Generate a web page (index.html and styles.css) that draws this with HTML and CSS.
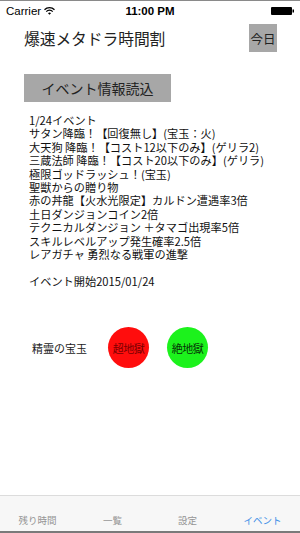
FILE: index.html
```html
<!DOCTYPE html>
<html lang="ja">
<head>
<meta charset="utf-8">
<link rel="stylesheet" href="styles.css">
</head>
<body>
<div class="screen">
  <div class="status">
    <div class="status-left">
      <span class="carrier">Carrier</span>
      <svg class="wifi" width="11" height="8" viewBox="0 0 11 8">
        <path d="M0.5 2.8 A7 7 0 0 1 10.5 2.8" fill="none" stroke="#000" stroke-width="1.3"/>
        <path d="M2.3 4.6 A4.4 4.4 0 0 1 8.7 4.6" fill="none" stroke="#000" stroke-width="1.3"/>
        <path d="M4 6.3 A2 2 0 0 1 7 6.3 L5.5 7.8 Z" fill="#000"/>
      </svg>
    </div>
    <div class="time">11:00 PM</div>
    <div class="status-right">
      <svg width="23" height="8" viewBox="0 0 23 8">
        <rect x="0" y="0" width="21" height="8" rx="1" fill="#000"/>
        <rect x="21.5" y="2.5" width="1.5" height="3" fill="#000"/>
      </svg>
    </div>
  </div>

  <div class="header">
    <div class="title">爆速メタドラ時間割</div>
    <div class="today">今日</div>
  </div>

  <div class="load">イベント情報読込</div>

  <div class="events">
    <div class="line">1/24イベント</div>
    <div class="line">サタン降臨！【回復無し】(宝玉：火)</div>
    <div class="line">大天狗 降臨！【コスト12以下のみ】(ゲリラ2)</div>
    <div class="line">三蔵法師 降臨！【コスト20以下のみ】(ゲリラ)</div>
    <div class="line">極限ゴッドラッシュ！(宝玉)</div>
    <div class="line">聖獣からの贈り物</div>
    <div class="line">赤の丼龍【火水光限定】カルドン遭遇率3倍</div>
    <div class="line">土日ダンジョンコイン2倍</div>
    <div class="line">テクニカルダンジョン ＋タマゴ出現率5倍</div>
    <div class="line">スキルレベルアップ発生確率2.5倍</div>
    <div class="line">レアガチャ 勇烈なる戦軍の進撃</div>
    <div class="line">&nbsp;</div>
    <div class="line">イベント開始2015/01/24</div>
  </div>

  <div class="jewels">
    <div class="jewel-label">精霊の宝玉</div>
    <div class="orb orb-red">超地獄</div>
    <div class="orb orb-green">絶地獄</div>
  </div>

  <div class="spacer"></div>

  <div class="tabbar">
    <div class="tab">残り時間</div>
    <div class="tab">一覧</div>
    <div class="tab">設定</div>
    <div class="tab tab-active">イベント</div>
  </div>
</div>
</body>
</html>
```

FILE: styles.css
```css
html, body {
  margin: 0;
  padding: 0;
  background: #fff;
}

.screen {
  width: 300px;
  height: 533px;
  display: flex;
  flex-direction: column;
  font-family: "Noto Sans CJK JP", "Liberation Sans", sans-serif;
  color: #111;
  border-top: 1px solid #8a8a8a;
  box-sizing: border-box;
  overflow: hidden;
}

.status {
  height: 19px;
  display: flex;
  align-items: center;
  justify-content: space-between;
  padding: 0 6px;
  font-family: "Liberation Sans", sans-serif;
  font-size: 11.5px;
  color: #000;
}

.status-left {
  display: flex;
  align-items: center;
  gap: 3px;
  width: 60px;
}

.status-right {
  width: 60px;
  display: flex;
  justify-content: flex-end;
}

.time {
  font-weight: bold;
  font-size: 11.5px;
}

.header {
  margin-top: 4px;
  height: 28px;
  display: flex;
  align-items: center;
  justify-content: space-between;
  padding: 0 23px 0 24px;
}

.title {
  font-size: 15.8px;
  color: #222;
  letter-spacing: -0.1px;
}

.today {
  width: 28px;
  height: 28px;
  background: #a7a7a7;
  font-size: 12.5px;
  display: flex;
  align-items: center;
  justify-content: center;
  color: #222;
}

.load {
  margin: 22px 0 0 24px;
  width: 147px;
  height: 28px;
  background: #a7a7a7;
  font-size: 14px;
  color: #222;
  display: flex;
  align-items: center;
  justify-content: center;
}

.events {
  margin: 12px 0 0 29px;
  font-size: 11.2px;
  line-height: 13.4px;
  color: #111;
  white-space: nowrap;
}

.line {
  height: 13.4px;
}

.jewels {
  margin-top: 39px;
  display: flex;
  align-items: center;
  padding-left: 32px;
}

.jewel-label {
  font-size: 11px;
  width: 76px;
  color: #222;
}

.orb {
  width: 41px;
  height: 41px;
  border-radius: 50%;
  display: flex;
  align-items: center;
  justify-content: center;
  font-size: 11px;
  letter-spacing: -0.5px;
}

.orb-red {
  background: #ff0d0d;
  color: #7a0000;
}

.orb-green {
  background: #1cf21c;
  color: #063306;
  margin-left: 18px;
}

.spacer {
  flex: 1;
}

.tabbar {
  height: 22px;
  background: #f7f7f7;
  border-top: 1px solid #dcdcdc;
  border-bottom: 2px solid #7a7a7a;
  display: flex;
  align-items: center;
  padding-top: 13px;
  box-sizing: content-box;
}

.tab {
  flex: 1;
  text-align: center;
  font-size: 9.5px;
  color: #959595;
}

.tab-active {
  color: #3a8ee6;
}
```
